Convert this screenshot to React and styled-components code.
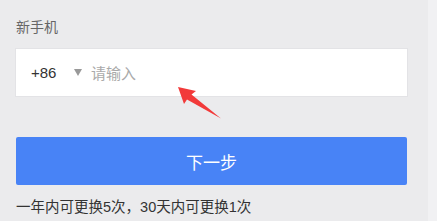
import React from 'react';
import styled, { createGlobalStyle } from 'styled-components';

const GlobalStyle = createGlobalStyle`
  html, body {
    margin: 0;
    padding: 0;
    background: #ebebed;
  }
  body {
    font-family: "Liberation Sans", "Noto Sans CJK SC", sans-serif;
  }
`;

const Page = styled.div`
  display: flex;
  width: 437px;
  height: 221px;
  overflow: hidden;
`;

const Main = styled.div`
  position: relative;
  width: 428px;
  padding: 17px 21px 0 16px;
  box-sizing: border-box;
  background: #ebebed;
`;

const Side = styled.div`
  flex: 1;
  background: #f1f1f3;
`;

const Label = styled.div`
  font-size: 14px;
  line-height: 20px;
  color: #666;
  margin-bottom: 12px;
`;

const InputBox = styled.div`
  display: flex;
  align-items: center;
  height: 47px;
  background: #fff;
  padding-left: 15px;
  box-sizing: border-box;
  box-shadow: 0 0 0 1px #e3e3e6;
`;

const Code = styled.span`
  font-size: 15px;
  color: #333;
  width: 43px;
`;

const Caret = styled.span`
  width: 0;
  height: 0;
  border-left: 4px solid transparent;
  border-right: 4px solid transparent;
  border-top: 7px solid #999;
  margin-right: 9px;
`;

const Placeholder = styled.span`
  font-size: 15px;
  color: #aaa;
`;

const Button = styled.div`
  margin-top: 41px;
  height: 48px;
  border-radius: 2px;
  background: #4883f6;
  color: #fff;
  font-size: 17px;
  display: flex;
  align-items: center;
  justify-content: center;
`;

const Note = styled.div`
  margin-top: 10px;
  font-size: 14.5px;
  color: #333;
`;

const Arrow = styled.svg`
  position: absolute;
  left: 172px;
  top: 82px;
`;

export default function App() {
  return (
    <>
      <GlobalStyle />
      <Page>
        <Main>
          <Label>新手机</Label>
          <InputBox>
            <Code>+86</Code>
            <Caret />
            <Placeholder>请输入</Placeholder>
          </InputBox>
          <Button>下一步</Button>
          <Note>一年内可更换5次，30天内可更换1次</Note>
          <Arrow width="56" height="42" viewBox="0 0 56 42">
            <path d="M6 5 L24 9 L19.5 12.5 L49 36.5 L15 17.5 L12 22 Z" fill="#f23a3a" />
          </Arrow>
        </Main>
        <Side />
      </Page>
    </>
  );
}
